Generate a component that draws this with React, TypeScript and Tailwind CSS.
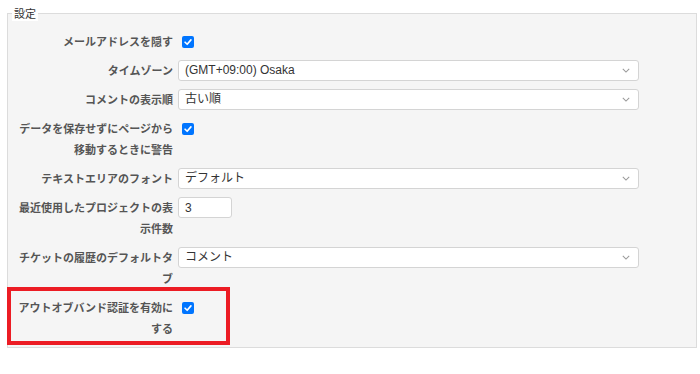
import { ReactNode } from "react";

const labelFont = { fontFamily: '"Noto Sans CJK JP", "Liberation Sans", sans-serif' };

function Check() {
  return (
    <span className="ml-[4px] mt-[5px] flex h-[12px] w-[12px] items-center justify-center rounded-[2px] bg-[#0075ff]">
      <svg viewBox="0 0 12 12" className="h-[10px] w-[10px]" fill="none" stroke="white" strokeWidth="2" strokeLinecap="round" strokeLinejoin="round">
        <path d="M2.5 6.3 L5 8.7 L9.5 3.5" />
      </svg>
    </span>
  );
}

function Select({ value }: { value: string }) {
  return (
    <div className="flex h-[21px] w-[461px] items-center justify-between rounded-[3px] border border-[#d4d4d4] bg-white pl-[6px] pr-[8px] text-[12px] text-[#333]">
      <span className="leading-[19px]">{value}</span>
      <svg viewBox="0 0 10 6" className="h-[5px] w-[8px]" fill="none" stroke="#999" strokeWidth="1.3">
        <path d="M1 1 L5 5 L9 1" />
      </svg>
    </div>
  );
}

function Row({ label, children, annotate }: { label: ReactNode; children: ReactNode; annotate?: boolean }) {
  return (
    <div className="relative flex items-start pl-[9px]">
      <div className="w-[156px] text-right text-[11px] font-bold leading-[21px] text-[#555]" style={labelFont}>
        {label}
      </div>
      <div className="ml-[5px] flex items-start">{children}</div>
      {annotate && (
        <div className="absolute left-[-1px] top-[-10px] h-[58px] w-[223px] border-[4px] border-[#ec1c24]" />
      )}
    </div>
  );
}

export default function App() {
  return (
    <div className="h-[374px] w-[700px] bg-white pt-[5px]" style={labelFont}>
      <fieldset className="ml-[7px] mr-[3px] border border-[#dcdcdc] bg-[#f5f5f5] pb-[8px] pt-[10px]">
        <legend className="ml-[4px] bg-white px-[2px] text-[11px] leading-[16px] text-[#333]">設定</legend>
        <div className="flex flex-col gap-[8px]" style={{ fontFamily: '"Liberation Sans", "Noto Sans CJK JP", sans-serif' }}>
          <Row label="メールアドレスを隠す">
            <Check />
          </Row>
          <Row label="タイムゾーン">
            <Select value="(GMT+09:00) Osaka" />
          </Row>
          <Row label="コメントの表示順">
            <Select value="古い順" />
          </Row>
          <Row label="データを保存せずにページから移動するときに警告">
            <Check />
          </Row>
          <Row label="テキストエリアのフォント">
            <Select value="デフォルト" />
          </Row>
          <Row label="最近使用したプロジェクトの表示件数">
            <div className="flex h-[21px] w-[54px] items-center rounded-[3px] border border-[#d4d4d4] bg-white pl-[6px] text-[12px] text-[#333]">
              3
            </div>
          </Row>
          <Row label="チケットの履歴のデフォルトタブ">
            <Select value="コメント" />
          </Row>
          <Row label="アウトオブバンド認証を有効にする" annotate>
            <Check />
          </Row>
        </div>
      </fieldset>
    </div>
  );
}
